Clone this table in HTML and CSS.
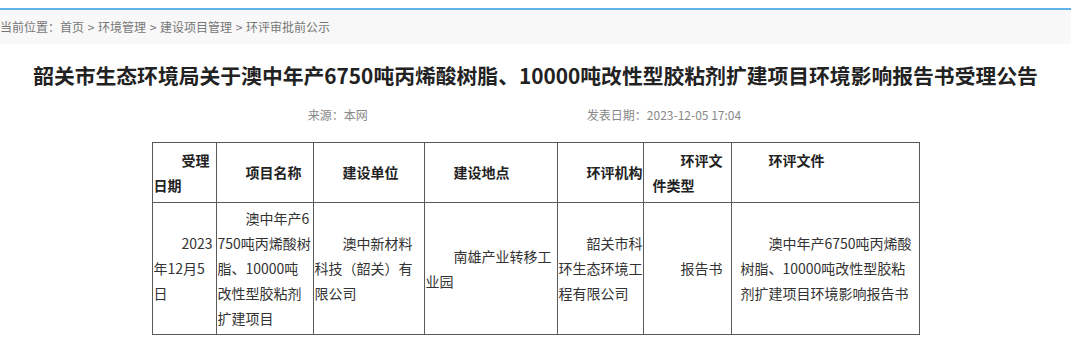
FILE: index.html
```html
<!DOCTYPE html>
<html lang="zh-CN">
<head>
<meta charset="utf-8">
<title>环评审批前公示</title>
<link rel="stylesheet" href="styles.css">
</head>
<body>
<div class="page">
  <div class="crumb">当前位置：首页 &gt; 环境管理 &gt; 建设项目管理 &gt; 环评审批前公示</div>
  <h1 class="title">韶关市生态环境局关于澳中年产6750吨丙烯酸树脂、10000吨改性型胶粘剂扩建项目环境影响报告书受理公告</h1>
  <div class="meta">
    <span>来源：本网</span>
    <span>发表日期：2023-12-05 17:04</span>
  </div>
  <table class="notice">
    <colgroup>
      <col class="c1"><col class="c2"><col class="c3"><col class="c4"><col class="c5"><col class="c6"><col class="c7">
    </colgroup>
    <tr class="head">
      <th>受理<br>日期</th>
      <th>项目名称</th>
      <th>建设单位</th>
      <th>建设地点</th>
      <th>环评机构</th>
      <th class="wide">环评文<br>件类型</th>
      <th class="wide top">环评文件</th>
    </tr>
    <tr class="body">
      <td>2023<br>年12月5<br>日</td>
      <td>澳中年产6<br>750吨丙烯酸树<br>脂、10000吨<br>改性型胶粘剂<br>扩建项目</td>
      <td>澳中新材料<br>科技（韶关）有<br>限公司</td>
      <td>南雄产业转移工<br>业园</td>
      <td>韶关市科<br>环生态环境工<br>程有限公司</td>
      <td class="wide">报告书</td>
      <td class="wide">澳中年产6750吨丙烯酸<br>树脂、10000吨改性型胶粘<br>剂扩建项目环境影响报告书</td>
    </tr>
  </table>
  <p class="after">公示期间，公众可通过信函、传真、电子邮件等方式向我局反映与该建设项目环境影响评价有关的意见和建议，联系电话及地址详见附件。</p>
</div>
</body>
</html>
```
FILE: styles.css
```css
html, body {
  margin: 0;
  padding: 0;
  background: #fff;
}
body {
  font-family: "Noto Sans CJK SC", "Microsoft YaHei", sans-serif;
  color: #333;
  overflow: hidden;
}
.page {
  width: 1071px;
  padding-top: 8px;
}
.crumb {
  border-top: 2px solid #5cb2ea;
  background: #f8f8f8;
  height: 34px;
  line-height: 34px;
  font-size: 12px;
  color: #777;
  white-space: nowrap;
  word-spacing: 1px;
}
.title {
  margin: 16px 0 0;
  font-size: 20.8px;
  line-height: 30px;
  font-weight: bold;
  color: #222;
  text-align: center;
  white-space: nowrap;
}
.meta {
  margin-top: 15px;
  display: flex;
  justify-content: center;
  gap: 219px;
  padding-right: 22px;
  font-size: 12px;
  line-height: 20px;
  color: #888;
}
.notice {
  margin: 17px auto 0;
  width: 767px;
  border-collapse: collapse;
  table-layout: fixed;
  font-size: 14px;
  line-height: 25px;
  color: #333;
}
.c1 { width: 64px; }
.c2 { width: 97px; }
.c3 { width: 111px; }
.c4 { width: 133px; }
.c5 { width: 86px; }
.c6 { width: 88px; }
.c7 { width: 188px; }
.notice th,
.notice td {
  border: 1px solid #5a5a5a;
  padding: 3px 1px;
  text-align: left;
  text-indent: 2em;
  vertical-align: middle;
  white-space: nowrap;
  overflow: visible;
}
.notice th {
  font-weight: bold;
  color: #222;
}
.notice .wide {
  padding-left: 9px;
  padding-right: 4px;
}
.notice .top {
  vertical-align: top;
  padding-top: 5px;
}
.head { height: 60px; }
.body { height: 131px; }
.after {
  margin: 1px 0 0;
  padding: 0 30px;
  font-size: 14px;
  line-height: 20px;
  text-indent: 2em;
  color: #333;
  white-space: nowrap;
}
```
